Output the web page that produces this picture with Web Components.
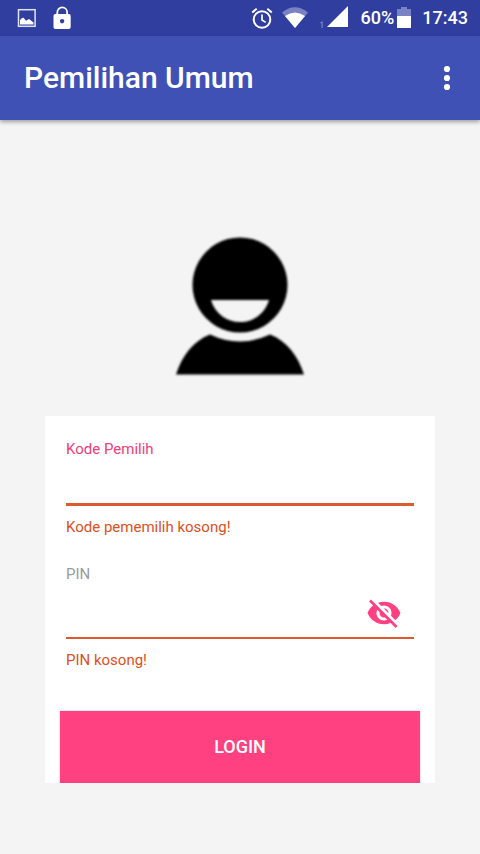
<!DOCTYPE html>
<html lang="id">
<head>
<meta charset="utf-8">
<meta name="viewport" content="width=device-width, initial-scale=1">
<title>Pemilihan Umum</title>
<style>
  body {
    margin: 0;
    font-family: Roboto, "Noto Sans", sans-serif;
    background: #f4f4f4;
  }
</style>
</head>
<body>
<login-screen></login-screen>

<script>
function define(name, html, setup) {
  const template = document.createElement('template');
  template.innerHTML = html;
  customElements.define(name, class extends HTMLElement {
    connectedCallback() {
      if (this.shadowRoot) return;
      const root = this.attachShadow({ mode: 'open' });
      root.append(template.content.cloneNode(true));
      if (setup) setup(this, root);
    }
  });
}

define('status-bar', `
<style>
  :host { display: flex; align-items: center; justify-content: space-between; height: 36px; padding: 0 12px 0 16px; background: #303f9f; color: #fff; font-size: 18px; font-weight: 500; line-height: 36px; }
  svg { display: block; flex: none; }
  .group { display: flex; align-items: center; }
  .notices { gap: 14px; }
  .wifi { margin-left: 8px; }
  .signal { margin-left: 10px; }
  .level { margin-left: 12px; }
  .battery { margin-left: 3px; }
  .clock { margin-left: 11px; }
</style>
<div class="group notices">
  <svg width="22" height="24" viewBox="0 0 22 24" aria-label="Gambar"><rect x="2.5" y="3.7" width="16.6" height="16.6" fill="none" stroke="#dfe2f5" stroke-width="1.5"/><path d="M4 18.5v-4.3q1.5-3 3.5-2.5l2.5 3 3-1.8 4.5 3.5v2.1z" fill="#fff"/></svg>
  <svg width="20" height="24" viewBox="0 0 20 24" aria-label="Terkunci"><path d="M5.3 9V6.300a4.900 4.900 0 0 1 9.800 0V9" fill="none" stroke="#fff" stroke-width="1.8"/><path fill="#fff" fill-rule="evenodd" d="M3.400 8h13.400q1.900 0 1.900 1.900v11.200q0 1.900-1.900 1.900H3.400q-1.900 0-1.900-1.900V9.900q0-1.900 1.900-1.900zM10.100 13a2.200 2.200 0 1 0 .01 0z"/></svg>
</div>
<div class="group">
  <svg width="22" height="24" viewBox="0 0 22 24" aria-label="Alarm" fill="none" stroke="#fff"><circle cx="11" cy="13.500" r="8.300" stroke-width="2"/><path d="M11 8.500v5.500l3.700 2.400" stroke-width="1.700"/><path d="M1.200 6.500l4.500-3.700M20.800 6.500l-4.500-3.700" stroke-width="2"/></svg>
  <svg class="wifi" width="28" height="24" viewBox="0 0 28 24" aria-label="Wi-Fi"><path fill="#7982c2" d="M1 6.500Q14-4 27 6.500L14 22z"/><path fill="#fff" d="M4 10q10-7 20 0L14 22z"/></svg>
  <svg class="signal" width="30" height="24" viewBox="0 0 30 24" aria-label="Sinyal"><path d="M1.300 17l1.800-1v6" fill="none" stroke="#7982c2" stroke-width="1.200"/><path fill="#fff" d="M29 0v21H8z"/></svg>
  <span class="level">60%</span>
  <svg class="battery" width="14" height="24" viewBox="0 0 14 24" aria-label="Baterai"><path fill="#7982c2" d="M4 1h6v2h4v8H0V3h4z"/><path fill="#fff" d="M0 10h14v12H0z"/></svg>
  <span class="clock">17:43</span>
</div>`);

define('app-toolbar', `
<style>
  :host { display: flex; align-items: center; justify-content: space-between; height: 84px; padding: 0 15px 0 24px; background: #3f51b5; color: #fff; box-shadow: 0 2px 4px rgba(0,0,0,.35); }
  h1 { margin: 0; font-size: 30px; line-height: 36px; font-weight: 500; }
  button { display: block; width: 36px; height: 48px; padding: 0; border: 0; background: none; color: inherit; }
  svg { display: block; margin: auto; }
</style>
<h1><slot></slot></h1>
<button type="button" aria-label="Opsi lainnya"><svg width="8" height="26" viewBox="0 0 8 26" fill="currentColor"><circle cx="4" cy="4" r="3.100"/><circle cx="4" cy="13" r="3.100"/><circle cx="4" cy="22" r="3.100"/></svg></button>`);

define('voter-avatar', `
<style>
  :host { display: block; }
  svg { display: block; margin: auto; filter: blur(1px); }
</style>
<svg width="132" height="142" viewBox="0 0 132 142" aria-label="Pemilih"><path fill-rule="evenodd" d="M66 2.500a47.500 47.500 0 1 0 .01 0zM37 65h58C91 79 79 87 66 87S41 79 37 65z"/><path d="M2 139.500C8 121 19 106 36 99.500q30 14 60 0C113 106 124 121 130 139.500z"/></svg>`);

define('visibility-toggle', `
<style>
  :host { display: block; }
  button { display: block; padding: 0; border: 0; background: none; color: #ff4081; }
  svg { display: block; }
</style>
<button type="button" aria-label="Tampilkan PIN"><svg width="36" height="36" viewBox="0 0 24 24" fill="currentColor"><path d="M12 7c2.760 0 5 2.240 5 5 0 .650-.130 1.260-.360 1.830l2.920 2.920c1.510-1.260 2.700-2.890 3.430-4.750-1.730-4.390-6-7.500-11-7.500-1.400 0-2.740.250-3.980.700l2.160 2.160C10.740 7.130 11.350 7 12 7zM2 4.270l2.280 2.280.460.460C3.080 8.300 1.780 10.020 1 12c1.730 4.390 6 7.500 11 7.500 1.550 0 3.030-.300 4.380-.840l.420.420L19.730 22 21 20.730 3.270 3 2 4.270zM7.530 9.800l1.550 1.550c-.050.210-.080.430-.080.650 0 1.660 1.340 3 3 3 .220 0 .440-.030.650-.080l1.550 1.550c-.670.330-1.410.530-2.200.530-2.760 0-5-2.240-5-5 0-.790.200-1.530.530-2.200zm4.310-.780l3.150 3.150.020-.160c0-1.660-1.340-3-3-3l-.170.010z"/></svg></button>`);

define('text-field', `
<style>
  :host { display: block; font-size: 15px; line-height: 20px; --hint: #9b9b9b; --line: 2px; --box: 55px; }
  :host([active]) { --hint: #ec407a; --line: 3px; --box: 47px; }
  label { display: block; color: var(--hint); }
  .row { display: flex; align-items: center; box-sizing: border-box; height: var(--box); border-bottom: var(--line) solid #dd5a30; }
  input { flex: 1; min-width: 0; height: 100%; box-sizing: border-box; padding: 0; border: 0; outline: 0; background: none; font: inherit; font-size: 18px; }
  ::slotted(*) { margin: 4px 12px 0 0; }
  p { margin: 11px 0 0; color: #dd5022; }
</style>
<label for="field"></label>
<div class="row"><input id="field" aria-invalid="true" aria-describedby="error"><slot></slot></div>
<p id="error"></p>`, (host, root) => {
  root.querySelector('label').textContent = host.getAttribute('label');
  root.querySelector('input').type = host.getAttribute('type') || 'text';
  root.querySelector('p').textContent = host.getAttribute('error');
});

define('login-button', `
<style>
  :host { display: block; }
  button { display: block; width: 100%; height: 72px; padding: 0; border: 0; background: #ff4081; color: #fff; font: inherit; font-size: 18px; font-weight: 500; line-height: 24px; box-shadow: 0 0 2px rgba(0,0,0,.25); }
</style>
<button type="submit"><slot></slot></button>`);

define('login-screen', `
<style>
  :host { display: block; }
  main { display: flex; flex-direction: column; gap: 39px; padding: 115px 45px 0; }
  form { display: block; padding: 23px 15px 0; background: #fff; overflow: hidden; }
  .fields { display: grid; gap: 27px; padding: 0 6px 41px; }
</style>
<status-bar></status-bar>
<app-toolbar>Pemilihan Umum</app-toolbar>
<main>
  <voter-avatar></voter-avatar>
  <form>
    <div class="fields">
      <text-field active label="Kode Pemilih" error="Kode pememilih kosong!"></text-field>
      <text-field type="password" label="PIN" error="PIN kosong!"><visibility-toggle></visibility-toggle></text-field>
    </div>
    <login-button>LOGIN</login-button>
  </form>
</main>`);
</script>
</body>
</html>
